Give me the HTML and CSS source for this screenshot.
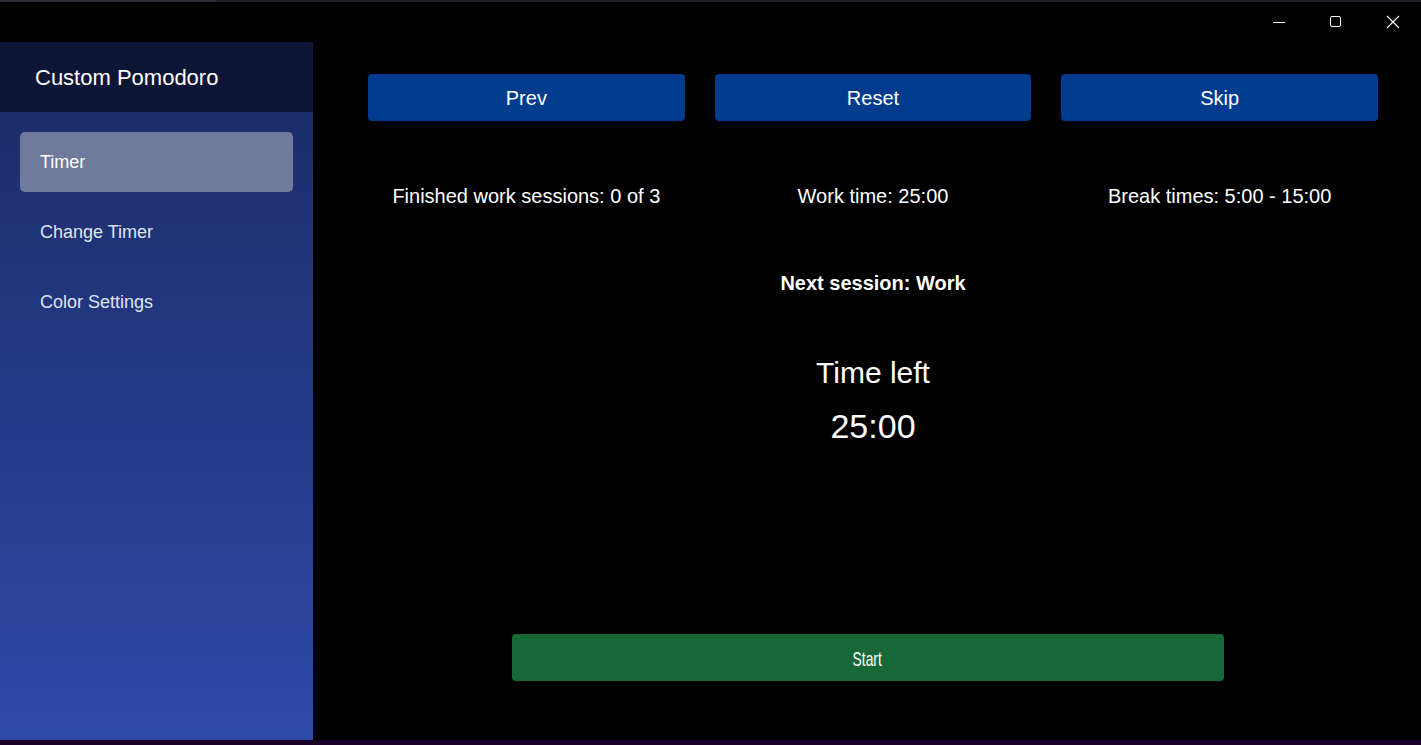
FILE: index.html
```html
<!DOCTYPE html>
<html lang="en">
<head>
<meta charset="utf-8">
<title>Custom Pomodoro</title>
<link rel="stylesheet" href="styles.css">
</head>
<body>
<div class="window">
  <div class="topstrip"><div class="topstrip-tab"></div></div>
  <div class="titlebar">
    <div class="winctl">
      <svg width="14" height="14" viewBox="0 0 14 14"><line x1="1" y1="7.5" x2="13" y2="7.5" stroke="#fff" stroke-width="1"/></svg>
    </div>
    <div class="winctl">
      <svg width="14" height="14" viewBox="0 0 14 14"><rect x="1.5" y="1.5" width="10" height="10" rx="1.5" fill="none" stroke="#fff" stroke-width="1"/></svg>
    </div>
    <div class="winctl">
      <svg width="14" height="14" viewBox="0 0 14 14"><path d="M1 1 L13 13 M13 1 L1 13" stroke="#fff" stroke-width="1.1" fill="none"/></svg>
    </div>
  </div>
  <div class="app">
    <aside class="sidebar">
      <div class="sidebar-header">Custom Pomodoro</div>
      <nav class="nav">
        <div class="nav-item active">Timer</div>
        <div class="nav-item">Change Timer</div>
        <div class="nav-item">Color Settings</div>
      </nav>
    </aside>
    <main class="main">
      <div class="top">
        <div class="btn-row">
          <button class="btn blue">Prev</button>
          <button class="btn blue">Reset</button>
          <button class="btn blue">Skip</button>
        </div>
        <div class="info-row">
          <div class="info">Finished work sessions: 0 of 3</div>
          <div class="info">Work time: 25:00</div>
          <div class="info">Break times: 5:00 - 15:00</div>
        </div>
        <div class="next">Next session: Work</div>
        <div class="time-label">Time left</div>
        <div class="time-value">25:00</div>
      </div>
      <button class="btn green start"><span class="narrow">Start</span></button>
    </main>
  </div>
  <div class="bottomstrip"></div>
</div>
</body>
</html>
```
FILE: styles.css
```css
* { box-sizing: border-box; }
html, body {
  margin: 0;
  padding: 0;
  background: #000;
  width: 1421px;
  height: 745px;
  overflow: hidden;
  font-family: "Liberation Sans", Arial, sans-serif;
  color: #fff;
}
.window {
  display: flex;
  flex-direction: column;
  height: 745px;
}
.topstrip {
  height: 2px;
  background: #1e1e24;
  display: flex;
}
.topstrip-tab {
  width: 216px;
  background: #2c2c32;
}
.titlebar {
  height: 40px;
  display: flex;
  justify-content: flex-end;
  align-items: flex-start;
  padding-top: 13px;
  padding-right: 0;
}
.winctl {
  width: 57px;
  display: flex;
  justify-content: center;
}
.winctl svg { display: block; }
.app {
  flex: 1;
  display: flex;
  min-height: 0;
}
.sidebar {
  width: 313px;
  display: flex;
  flex-direction: column;
  background: linear-gradient(180deg, #1b2a64 0%, #2e4aa8 100%);
}
.sidebar-header {
  height: 70px;
  background: #0e1638;
  display: flex;
  align-items: center;
  padding-left: 35px;
  padding-top: 1px;
  font-size: 22px;
}
.nav {
  display: flex;
  flex-direction: column;
  gap: 10px;
  padding: 20px 20px 0 20px;
}
.nav-item {
  height: 60px;
  display: flex;
  align-items: center;
  padding-left: 20px;
  border-radius: 5px;
  font-size: 18px;
  color: #dfe3ef;
}
.nav-item.active {
  background: #707a9c;
  color: #fff;
}
.main {
  flex: 1;
  display: flex;
  flex-direction: column;
}
.top {
  padding: 32px 43px 0 55px;
  display: flex;
  flex-direction: column;
}
.btn-row, .info-row {
  display: grid;
  grid-template-columns: 1fr 1fr 1fr;
  column-gap: 30px;
}
.btn {
  height: 47px;
  border: none;
  border-radius: 4px;
  color: #fff;
  font-family: "Liberation Sans", Arial, sans-serif;
  font-size: 20px;
  padding: 2px 0 0 0;
}
.btn.blue { background: #003b8d; }
.btn.green { background: #176837; }
.info-row { margin-top: 64px; }
.info {
  text-align: center;
  font-size: 20px;
  line-height: 23px;
}
.next {
  margin-top: 64px;
  text-align: center;
  font-weight: bold;
  font-size: 20px;
  line-height: 23px;
}
.time-label {
  margin-top: 61px;
  text-align: center;
  font-size: 30px;
  line-height: 34px;
}
.time-value {
  margin-top: 17px;
  text-align: center;
  font-size: 34px;
  line-height: 39px;
}
.start {
  width: 712px;
  align-self: center;
  margin-top: 188px;
  margin-left: 1px;
}
.narrow {
  display: inline-block;
  font-size: 21px;
  transform: scaleX(0.66);
}
.bottomstrip {
  height: 5px;
  background: #1a0028;
}
```
